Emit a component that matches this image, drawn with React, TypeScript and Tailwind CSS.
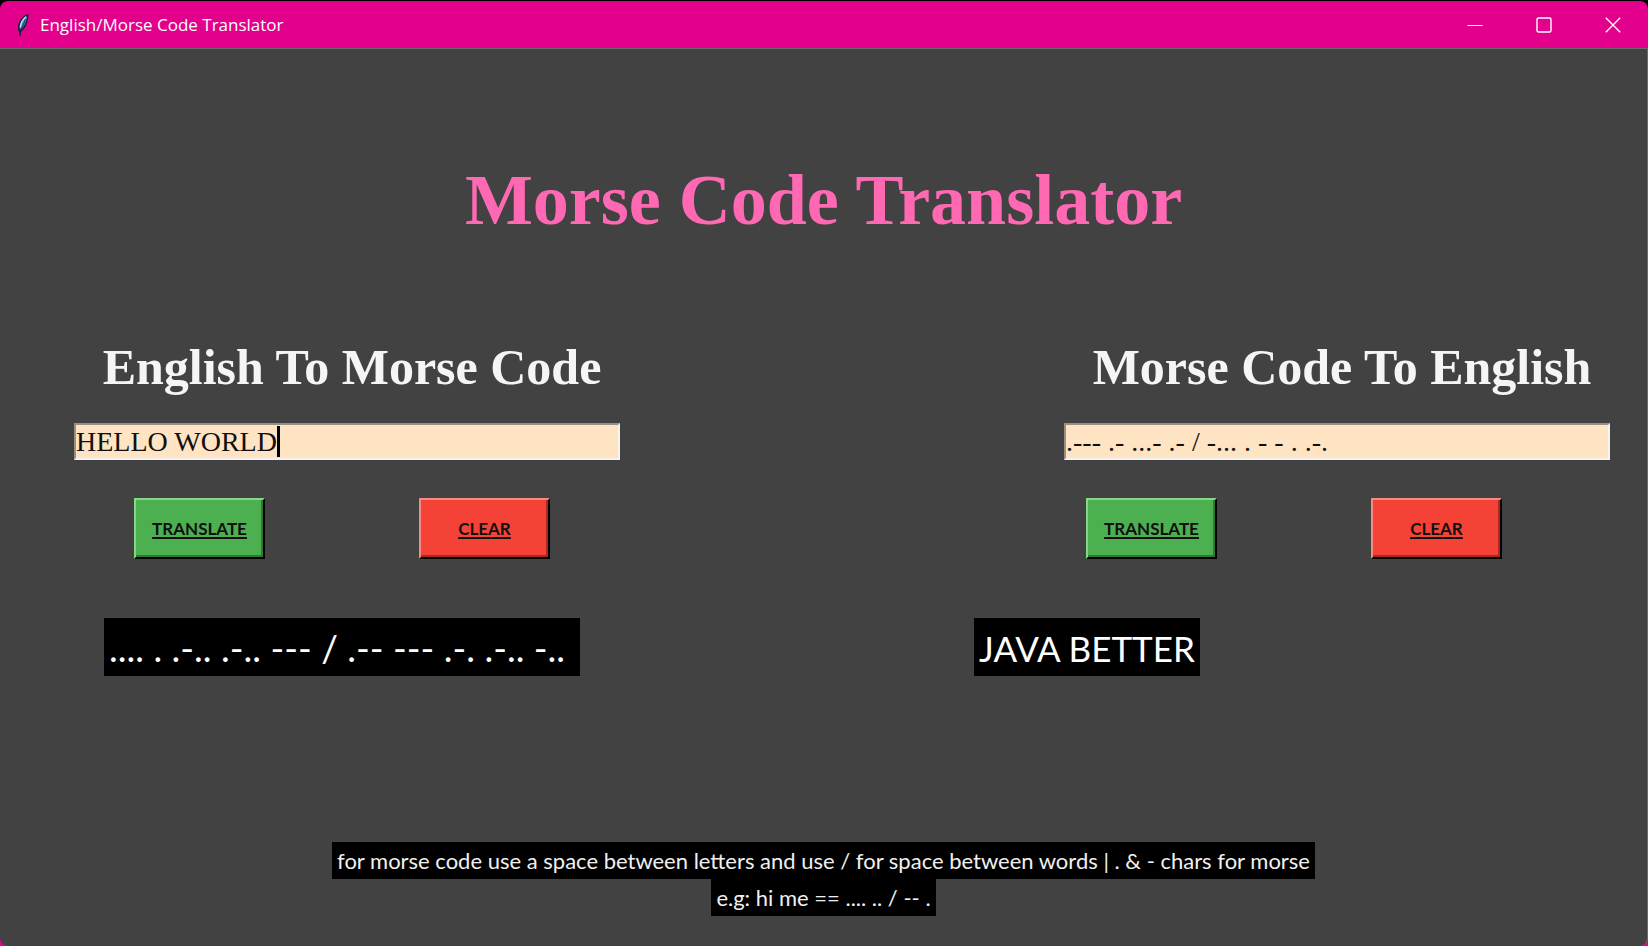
import { useState } from "react";

type Tone = "green" | "red";

const toneClasses: Record<Tone, string> = {
  green: "bg-[#4caf50] border-t-[#86d589] border-l-[#86d589] shadow-[inset_-2px_-2px_0_#2f7a33]",
  red: "bg-[#f44336] border-t-[#f58a80] border-l-[#f58a80] shadow-[inset_-2px_-2px_0_#b3261c]",
};

function ActionButton({ tone, label, onClick }: { tone: Tone; label: string; onClick?: () => void }) {
  return (
    <button
      type="button"
      onClick={onClick}
      className={`h-[61px] w-[131px] border-2 border-r-black border-b-black pt-px font-['Lato','Noto_Sans',sans-serif] text-[17px] leading-5 font-bold text-[#101010] underline decoration-2 underline-offset-2 ${toneClasses[tone]}`}
    >
      {label}
    </button>
  );
}

function FeatherIcon() {
  return (
    <svg viewBox="0 0 16 26" className="h-[26px] w-4" aria-hidden="true">
      <path
        d="M13.500 2C9.500 2.500 5 6.500 3.500 12c-.8 3-.8 5.500.5 7.500l.7 4.500h1.300v-4C10.500 16.500 13.500 10 13.500 2Z"
        fill="#1b2238"
      />
      <path d="M12 4C9 5.500 6 9 5 13.500c-.4 2-.3 3.500.3 4.500C9 15 11.800 10 12 4Z" fill="#3f7fca" />
      <path d="M11 4.800C8 7 6 10.500 5.200 15.500" fill="none" stroke="#c3dcf2" strokeWidth="1.500" />
      <path d="M10.500 7.500C9 11.500 7.500 14 5.300 19" fill="none" stroke="#1b2238" strokeWidth=".8" />
    </svg>
  );
}

function TitleBar() {
  return (
    <header className="flex h-12 items-center rounded-t-lg border-b border-[#6b6b6b] bg-[#e3008c] pl-[15px]">
      <FeatherIcon />
      <span className="ml-[9px] flex-1 font-['Open_Sans','Noto_Sans',sans-serif] text-[17px] leading-6 text-white">
        English/Morse Code Translator
      </span>
      <div className="flex pr-px text-white">
        <button type="button" aria-label="Minimize" className="flex h-[46px] w-[69px] items-center justify-center">
          <svg viewBox="0 0 16 16" className="size-4" stroke="currentColor" fill="none">
            <path d="M.5 8.500h15" />
          </svg>
        </button>
        <button type="button" aria-label="Maximize" className="flex h-[46px] w-[69px] items-center justify-center">
          <svg viewBox="0 0 16 16" className="size-4" stroke="currentColor" strokeWidth="1.400" fill="none">
            <rect x="1" y="1" width="14" height="14" rx="1.500" />
          </svg>
        </button>
        <button type="button" aria-label="Close" className="flex h-[46px] w-[69px] items-center justify-center">
          <svg viewBox="0 0 16 16" className="size-4" stroke="currentColor" strokeWidth="1.300" fill="none">
            <path d="M.8.8l14.400 14.400M15.200.8.8 15.200" />
          </svg>
        </button>
      </div>
    </header>
  );
}

const headingClass =
  "font-['Liberation_Serif',serif] text-[50px] leading-[56px] font-bold text-[#f5f5f5] whitespace-nowrap";
const fieldClass =
  "h-[37px] w-full border-2 border-t-[#9a8f83] border-l-[#9a8f83] border-r-[#f4f4f4] border-b-[#f4f4f4] bg-[#ffe4c4] font-['Liberation_Serif',serif] text-[28px] leading-8 text-[#101010] outline-none";
const outputClass =
  "h-[58px] bg-black px-[5px] font-['Lato','Noto_Sans',sans-serif] leading-[60px] whitespace-pre text-white";
const hintClass =
  "h-[37px] bg-black px-[5px] font-['Lato','Noto_Sans',sans-serif] text-[22px] leading-[37px] whitespace-nowrap text-[#f0f0f0]";

export default function App() {
  const [english, setEnglish] = useState("HELLO WORLD");
  const [morse, setMorse] = useState(".--- .- ...- .- / -... . - - . .-.");

  return (
    <div className="flex min-h-screen flex-col bg-black pt-px">
      <TitleBar />
      <div className="flex flex-1 flex-col bg-[#e3008c]">
        <main className="flex flex-1 flex-col rounded-b-lg border-r border-[#6b6b6b] bg-[#424242]">
          <h1 className="mt-[111px] text-center font-['Liberation_Serif',serif] text-[72px] leading-[80px] font-bold text-[#ff69b4]">
            Morse Code Translator
          </h1>

          <div className="mt-[99px] flex justify-between pr-[37px] pl-[74px]">
            <section className="flex w-[546px] flex-col">
              <h2 className={`pl-[10px] text-center ${headingClass}`}>
                <label htmlFor="english">English To Morse Code</label>
              </h2>
              <div className="relative mt-[28px]">
                <input
                  id="english"
                  className={`caret-transparent ${fieldClass}`}
                  value={english}
                  onChange={(e) => setEnglish(e.target.value)}
                />
                <span className="absolute top-[3px] left-[203px] h-[31px] w-[3px] bg-black" />
              </div>
              <div className="mt-[38px] flex gap-[154px] pl-[60px]">
                <ActionButton tone="green" label="TRANSLATE" />
                <ActionButton tone="red" label="CLEAR" onClick={() => setEnglish("")} />
              </div>
              <output htmlFor="english" className={`mt-[59px] ml-[30px] self-start text-[37px] ${outputClass}`}>
                {".... . .-.. .-.. --- / .-- --- .-. .-.. -.. "}
              </output>
            </section>

            <section className="flex w-[636px] flex-col">
              <h2 className={`pl-[100px] text-center ${headingClass}`}>
                <label htmlFor="morse">Morse Code To English</label>
              </h2>
              <div className="mt-[28px] pl-[90px]">
                <input
                  id="morse"
                  className={fieldClass}
                  value={morse}
                  onChange={(e) => setMorse(e.target.value)}
                />
              </div>
              <div className="mt-[38px] flex gap-[154px] pl-[112px]">
                <ActionButton tone="green" label="TRANSLATE" />
                <ActionButton tone="red" label="CLEAR" onClick={() => setMorse("")} />
              </div>
              <output htmlFor="morse" className={`mt-[59px] self-start text-[35px] ${outputClass}`}>
                JAVA BETTER
              </output>
            </section>
          </div>

          <footer className="mt-auto flex flex-col items-center pb-[30px]">
            <p className={hintClass}>
              for morse code use a space between letters and use / for space between words | . &amp; - chars for morse
            </p>
            <p className={hintClass}>e.g: hi me == .... .. / -- .</p>
          </footer>
        </main>
      </div>
    </div>
  );
}
